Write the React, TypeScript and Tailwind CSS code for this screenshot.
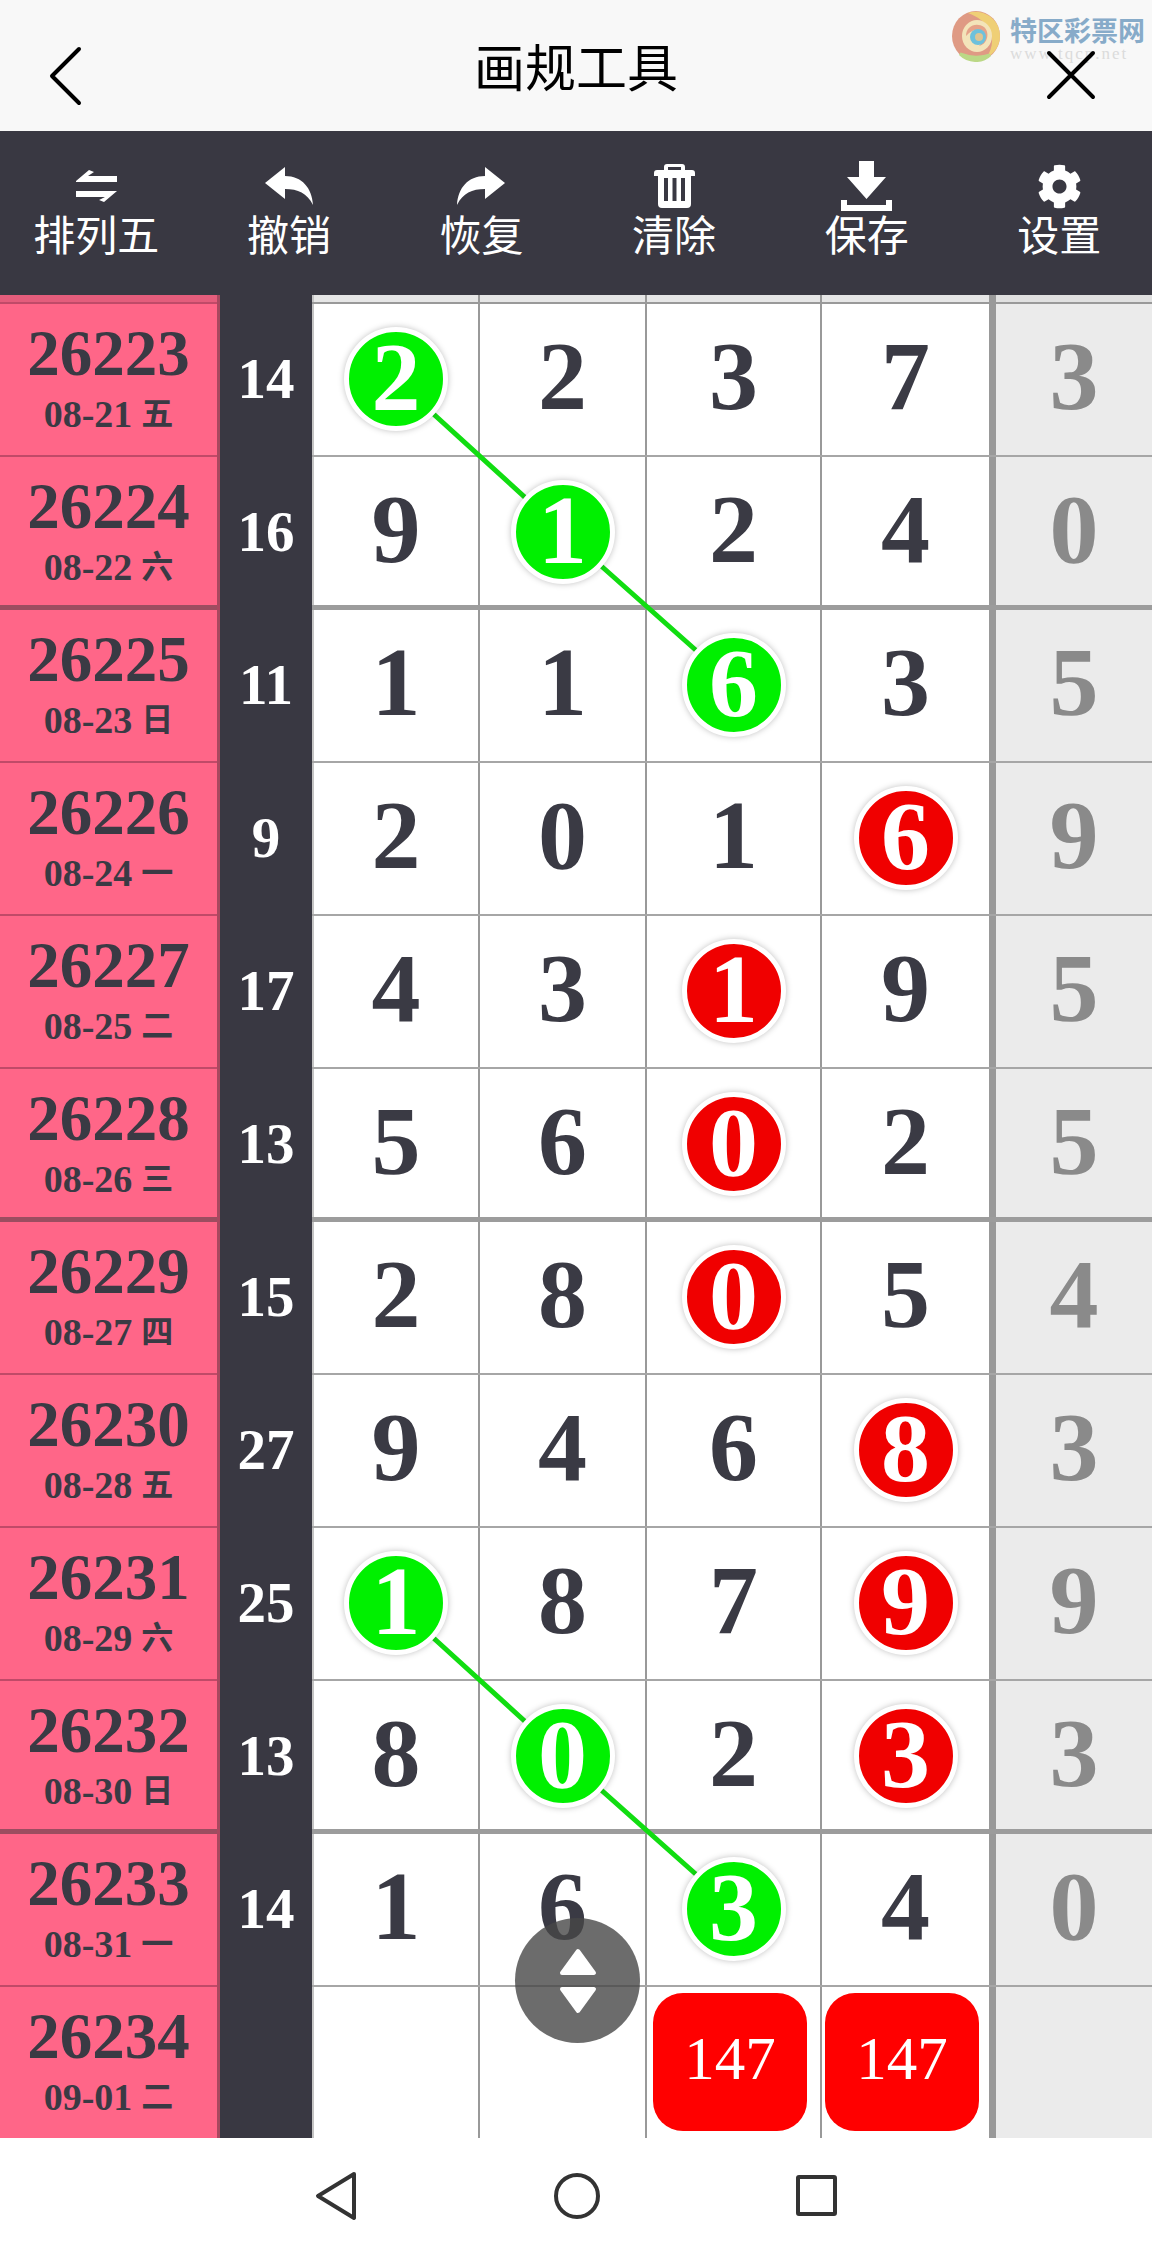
import { FaCog } from 'react-icons/fa';

const serif = '[font-family:"Liberation_Serif","Noto_Sans_CJK_SC",serif]';

type Mark = 'green' | 'red' | null;

interface Row {
  issue: string;
  date: string;
  week: string;
  sum?: number;
  nums: (number | null)[];
  marks: Mark[];
}

const g: Mark = 'green';
const r: Mark = 'red';
const n: Mark = null;

const rows: Row[] = [
  { issue: '26223', date: '08-21', week: '五', sum: 14, nums: [2, 2, 3, 7, 3], marks: [g, n, n, n, n] },
  { issue: '26224', date: '08-22', week: '六', sum: 16, nums: [9, 1, 2, 4, 0], marks: [n, g, n, n, n] },
  { issue: '26225', date: '08-23', week: '日', sum: 11, nums: [1, 1, 6, 3, 5], marks: [n, n, g, n, n] },
  { issue: '26226', date: '08-24', week: '一', sum: 9, nums: [2, 0, 1, 6, 9], marks: [n, n, n, r, n] },
  { issue: '26227', date: '08-25', week: '二', sum: 17, nums: [4, 3, 1, 9, 5], marks: [n, n, r, n, n] },
  { issue: '26228', date: '08-26', week: '三', sum: 13, nums: [5, 6, 0, 2, 5], marks: [n, n, r, n, n] },
  { issue: '26229', date: '08-27', week: '四', sum: 15, nums: [2, 8, 0, 5, 4], marks: [n, n, r, n, n] },
  { issue: '26230', date: '08-28', week: '五', sum: 27, nums: [9, 4, 6, 8, 3], marks: [n, n, n, r, n] },
  { issue: '26231', date: '08-29', week: '六', sum: 25, nums: [1, 8, 7, 9, 9], marks: [g, n, n, r, n] },
  { issue: '26232', date: '08-30', week: '日', sum: 13, nums: [8, 0, 2, 3, 3], marks: [n, g, n, r, n] },
  { issue: '26233', date: '08-31', week: '一', sum: 14, nums: [1, 6, 3, 4, 0], marks: [n, n, g, n, n] },
  { issue: '26234', date: '09-01', week: '二', nums: [null, null, null, null, null], marks: [n, n, n, n, n] },
];

const colWidths = ['w-[168px] border-l-[2px] border-l-[#c4c4c4]', 'w-[167px]', 'w-[175px]', 'w-[169px]'];

function ExchangeIcon() {
  return (
    <svg width="41" height="32" viewBox="0 0 41 32" fill="white">
      <path d="M0 11 L13 0 L18 2 L12 6 H41 V12 H0 Z" />
      <path d="M0 21 H41 L28 32 L23 30 L29 27 H0 Z" />
    </svg>
  );
}

function ReplyIcon() {
  return (
    <svg width="48" height="38" viewBox="0 0 48 38" fill="white">
      <path d="M0 16 L20 0 L20 9 C37 9 47 21 48 38 C42 26 33 22 20 22 L20 32 Z" />
    </svg>
  );
}

function ShareIcon() {
  return (
    <svg width="48" height="38" viewBox="0 0 48 38" fill="white">
      <path d="M48 16 L28 0 L28 9 C11 9 1 21 0 38 C6 26 15 22 28 22 L28 32 Z" />
    </svg>
  );
}

function TrashIcon() {
  return (
    <svg width="41" height="44" viewBox="0 0 41 44" fill="white">
      <path
        fillRule="evenodd"
        d="M13 0 h15 a3 3 0 0 1 3 3 v3 h7 a3 3 0 0 1 3 3 v3 h-4 v28 a4 4 0 0 1 -4 4 H8 a4 4 0 0 1 -4 -4 V12 H0 V9 a3 3 0 0 1 3 -3 h7 V3 a3 3 0 0 1 3 -3 Z M14 3 v3 h13 V3 Z M10 14 v23 h4 V14 Z M18.5 14 v23 h4 V14 Z M27 14 v23 h4 V14 Z"
      />
    </svg>
  );
}

function DownloadIcon() {
  return (
    <svg width="51" height="50" viewBox="0 0 51 50" fill="white">
      <path d="M18 0 h15 v16 h12 L25.500 38 L6 16 h12 Z" />
      <path d="M0 39 h6 v5 h39 v-5 h6 v11 H0 Z" />
    </svg>
  );
}

const tools = [
  { label: '排列五', icon: <ExchangeIcon /> },
  { label: '撤销', icon: <ReplyIcon /> },
  { label: '恢复', icon: <ShareIcon /> },
  { label: '清除', icon: <TrashIcon /> },
  { label: '保存', icon: <DownloadIcon /> },
  { label: '设置', icon: <FaCog size={45} color="white" /> },
];

function Logo() {
  return (
    <div className="absolute left-[952px] top-[10px] flex items-start gap-[10px] opacity-90">
      <svg width="48" height="52" viewBox="0 0 48 52" fill="none">
        <ellipse cx="24" cy="26" rx="24" ry="25" fill="#dd9078" />
        <path d="M16 3 C30 -2 48 8 48 26 C48 36 42 44 34 48 C40 40 42 30 38 21 C34 12 26 7 16 3 Z" fill="#efcb68" />
        <path d="M8 44 C16 52 30 53 38 45 C30 48 18 48 8 44 Z" fill="#b5d57a" stroke="#b5d57a" strokeWidth="3" />
        <ellipse cx="25" cy="26" rx="15" ry="16" fill="#f3e2b4" />
        <path d="M14 26 C14 16 24 12 32 17 C38 22 36 34 27 36 C34 30 32 20 25 20 C20 20 17 23 14 26 Z" fill="#e49a7d" />
        <circle cx="26" cy="27" r="8" fill="#5fbcd9" />
        <circle cx="27" cy="27" r="4" fill="#d9c08a" />
      </svg>
      <div className="flex flex-col">
        <span className="mt-[5px] whitespace-nowrap text-[27px] leading-[30px] font-bold text-[#7ba3c4] [font-family:'Noto_Sans_CJK_SC',sans-serif]">
          特区彩票网
        </span>
        <span className="whitespace-nowrap text-[17px] leading-[18px] tracking-[2px] text-[#d9d9d9] [font-family:'Liberation_Serif',serif]">
          www.tqcp.net
        </span>
      </div>
    </div>
  );
}

function Header() {
  return (
    <header className="relative flex h-[131px] items-center justify-center bg-[#f8f8f8]">
      <Logo />
      <svg className="absolute left-[47px] top-[46px]" width="36" height="60" viewBox="0 0 36 60" fill="none">
        <path d="M32 3 L5 30 L32 57" stroke="black" strokeWidth="4" strokeLinecap="round" strokeLinejoin="round" />
      </svg>
      <h1 className="text-[51px] leading-none font-normal text-black [font-family:'Noto_Sans_CJK_SC',sans-serif]">
        画规工具
      </h1>
      <svg className="absolute left-[1046px] top-[50px]" width="50" height="50" viewBox="0 0 50 50" fill="none">
        <path d="M3 3 L47 47 M47 3 L3 47" stroke="black" strokeWidth="4" strokeLinecap="round" />
      </svg>
    </header>
  );
}

function Toolbar() {
  return (
    <div className="grid h-[164px] grid-cols-[repeat(6,192.6px)] bg-[#393842] pt-[30px]">
      {tools.map((tool) => (
        <div key={tool.label} className="flex flex-col items-center">
          <div className="flex h-[50px] items-center justify-center">{tool.icon}</div>
          <span className="mt-[-4px] text-[42px] leading-[52px] whitespace-nowrap text-white [font-family:'Noto_Sans_CJK_SC',sans-serif]">
            {tool.label}
          </span>
        </div>
      ))}
    </div>
  );
}

function Ball({ value, mark }: { value: number; mark: Mark }) {
  const color = mark === 'green' ? 'bg-[#00f000]' : 'bg-[#f00000]';
  return (
    <div className={`relative z-10 flex h-[104px] w-[104px] translate-y-[3px] items-center justify-center rounded-full border-[5px] border-white pb-[4px] ${color} text-white shadow-[0_0_6px_rgba(0,0,0,0.25)]`}>
      {value}
    </div>
  );
}

function Board() {
  return (
    <div className="relative flex h-[1843px] overflow-hidden">
      <div className="w-[220px] shrink-0 border-r-[3px] border-[#a8485f] bg-[#ff6688]">
        <div className="h-[9px] border-b-[2px] border-[#c04a68] bg-[#e45d7c]" />
        {rows.map((row, i) => (
          <div
            key={row.issue}
            className={`flex h-[153px] flex-col items-center justify-center border-b-[2px] pb-[8px] ${i % 4 === 1 ? 'border-[#9c4d60] shadow-[inset_0_-3px_0_#9c4d60]' : 'border-[#c04a68]'} text-[#3a3a44] ${serif} font-bold`}
          >
            <span className="mb-[6px] text-[65px] leading-[70px]">{row.issue}</span>
            <span className="flex items-center gap-[9px] text-[38px] leading-[40px]">
              {row.date}
              <span className="text-[32px]">{row.week}</span>
            </span>
          </div>
        ))}
      </div>
      <div className={`w-[92px] shrink-0 bg-[#393842] pt-[9px] text-white ${serif} font-bold`}>
        {rows.map((row) => (
          <div key={row.issue} className="flex h-[153px] items-center justify-center pb-[4px] text-[57px]">
            {row.sum}
          </div>
        ))}
      </div>
      <div className={`min-w-0 flex-1 ${serif} font-bold`}>
        <div className="flex h-[9px] border-b-[2px] border-[#999]">
          {colWidths.map((w) => (
            <div key={w} className={`${w} border-r-[2px] border-r-[#999] bg-[#e6e6e6]`} />
          ))}
          <div className="w-[5px] bg-[#999]" />
          <div className="flex-1 bg-[#e0e0e0]" />
        </div>
        {rows.map((row, i) => (
          <div
            key={row.issue}
            className={`relative flex h-[153px] border-b-[2px] ${i % 4 === 1 ? 'border-[#9c9c9c] after:absolute after:inset-x-0 after:bottom-0 after:h-[3px] after:bg-[#9c9c9c]' : 'border-[#a6a6a6]'} text-[98px] leading-none text-[#3a3a44]`}
          >
            {colWidths.map((w, c) => (
              <div key={w} className={`${w} flex items-center justify-center border-r-[2px] border-r-[#999] pb-[7px]`}>
                {row.marks[c] ? <Ball value={row.nums[c] as number} mark={row.marks[c]} /> : row.nums[c]}
                {row.sum === undefined && c >= 2 && (
                  <div className="mr-[7px] flex h-[138px] w-[154px] translate-y-[3px] items-center justify-center rounded-[30px] bg-[#ff0000] pb-[8px] text-[61px] font-normal text-white">
                    147
                  </div>
                )}
              </div>
            ))}
            <div className="w-[5px] shrink-0 bg-[#999]" />
            <div className="flex flex-1 items-center justify-center bg-[#ebebeb] pb-[7px] text-[#8a8a8a]">{row.nums[4]}</div>
          </div>
        ))}
      </div>
      {/* connecting lines */}
      <svg className="absolute left-0 top-0 z-0" width="1152" height="1843" fill="none" stroke="#11dd11" strokeWidth="5">
        <path d="M395 84 L563 237 L735 390" />
        <path d="M395 1308 L563 1461 L735 1614" />
      </svg>
      <div className="absolute left-[515px] top-[1623px] z-20 flex h-[125px] w-[125px] flex-col items-center justify-center gap-[10px] rounded-full bg-[#474747]/80">
        <svg width="38" height="28" viewBox="0 0 38 28" fill="white" stroke="white" strokeWidth="4" strokeLinejoin="round">
          <path d="M19 3 L35 25 H3 Z" />
        </svg>
        <svg width="38" height="28" viewBox="0 0 38 28" fill="white" stroke="white" strokeWidth="4" strokeLinejoin="round">
          <path d="M19 25 L35 3 H3 Z" />
        </svg>
      </div>
    </div>
  );
}

function NavBar() {
  return (
    <nav className="flex h-[117px] items-center bg-white">
      <div className="flex w-full items-center justify-center gap-[196px] pb-[2px] pr-[2px]">
        <svg width="44" height="52" viewBox="0 0 44 52" fill="none">
          <path d="M40 4 L4 26 L40 48 Z" stroke="#333" strokeWidth="4" strokeLinejoin="round" />
        </svg>
        <div className="h-[46px] w-[46px] rounded-full border-[4px] border-[#333]" />
        <div className="h-[41px] w-[41px] rounded-[3px] border-[4px] border-[#333]" />
      </div>
    </nav>
  );
}

export default function App() {
  return (
    <div className="h-[2255px] w-[1152px] overflow-hidden bg-white">
      <Header />
      <Toolbar />
      <Board />
      <NavBar />
    </div>
  );
}
